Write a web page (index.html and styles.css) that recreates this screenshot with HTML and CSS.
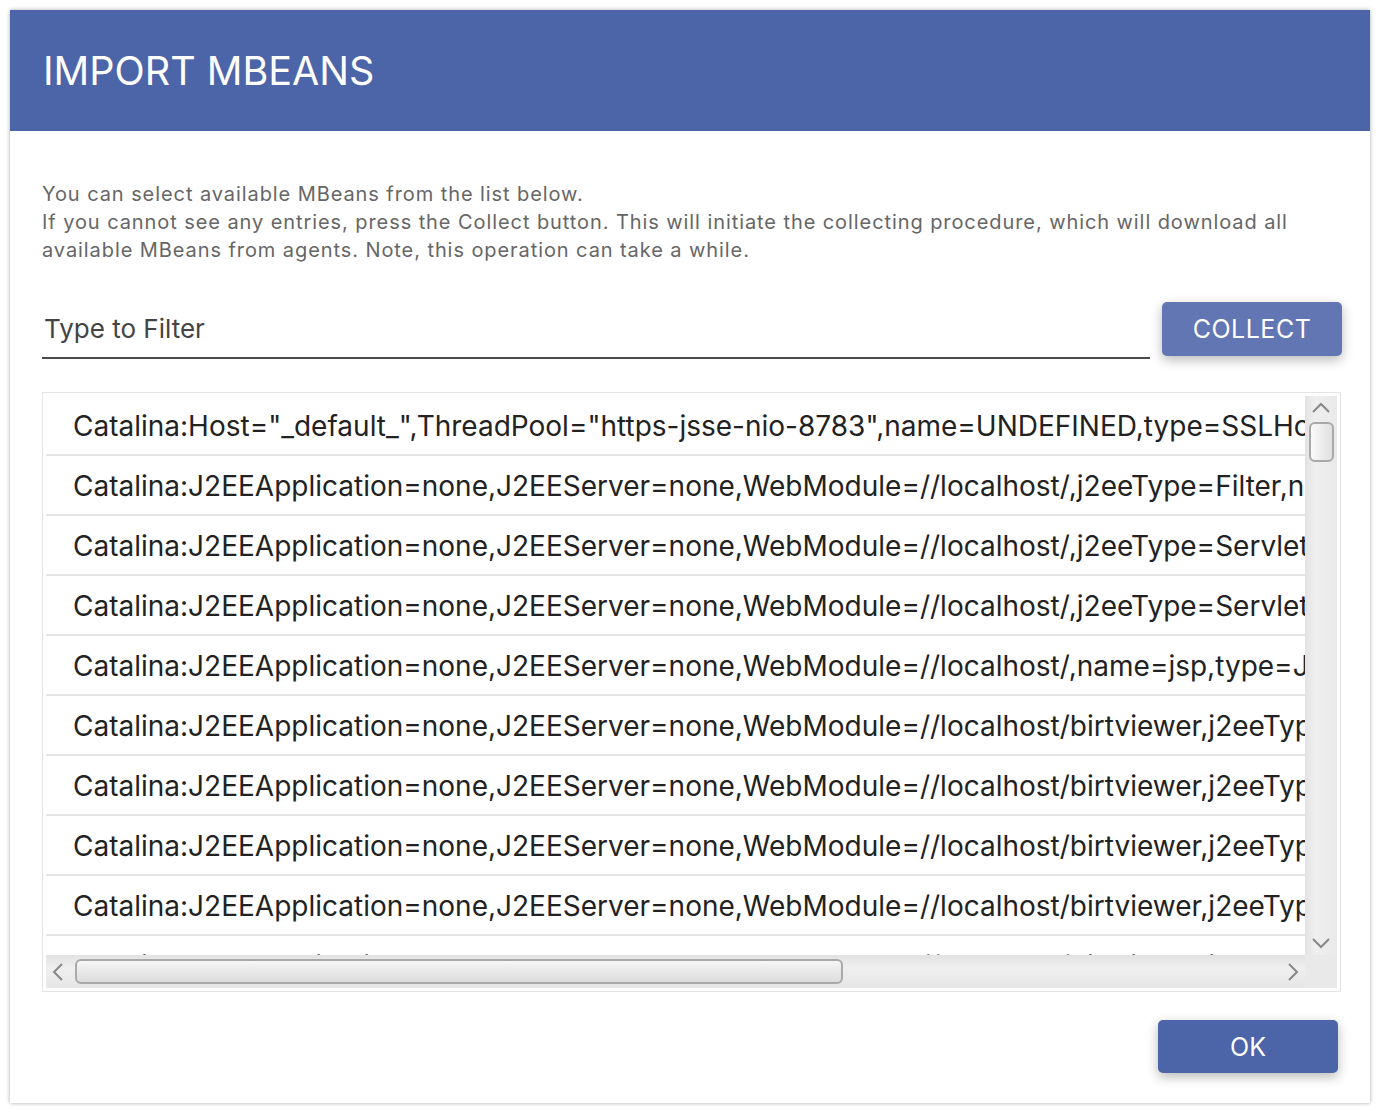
FILE: index.html
```html
<!DOCTYPE html>
<html>
<head>
<meta charset="utf-8">
<link rel="stylesheet" href="styles.css">
</head>
<body>
<div class="dialog">
  <div class="header"><h1 class="title">IMPORT MBEANS</h1></div>
  <div class="content">
    <p class="desc">You can select available MBeans from the list below.<br>If you cannot see any entries, press the Collect button. This will initiate the collecting procedure, which will download all available MBeans from agents. Note, this operation can take a while.</p>
    <div class="filter-row">
      <div class="filter"><span class="placeholder">Type to Filter</span></div>
      <button class="btn collect">COLLECT</button>
    </div>
    <div class="listbox">
      <div class="viewport">
        <div class="row">Catalina:Host="_default_",ThreadPool="https-jsse-nio-8783",name=UNDEFINED,type=SSLHostConfig</div>
        <div class="row">Catalina:J2EEApplication=none,J2EEServer=none,WebModule=//localhost/,j2eeType=Filter,name=Tomcat WebSocket (JSR356) Filter</div>
        <div class="row">Catalina:J2EEApplication=none,J2EEServer=none,WebModule=//localhost/,j2eeType=Servlet,name=default</div>
        <div class="row">Catalina:J2EEApplication=none,J2EEServer=none,WebModule=//localhost/,j2eeType=Servlet,name=jsp</div>
        <div class="row">Catalina:J2EEApplication=none,J2EEServer=none,WebModule=//localhost/,name=jsp,type=JspMonitor</div>
        <div class="row">Catalina:J2EEApplication=none,J2EEServer=none,WebModule=//localhost/birtviewer,j2eeType=Filter,name=ViewerFilter</div>
        <div class="row">Catalina:J2EEApplication=none,J2EEServer=none,WebModule=//localhost/birtviewer,j2eeType=Filter,name=Tomcat WebSocket (JSR356) Filter</div>
        <div class="row">Catalina:J2EEApplication=none,J2EEServer=none,WebModule=//localhost/birtviewer,j2eeType=Servlet,name=EngineServlet</div>
        <div class="row">Catalina:J2EEApplication=none,J2EEServer=none,WebModule=//localhost/birtviewer,j2eeType=Servlet,name=ViewerServlet</div>
        <div class="row">Catalina:J2EEApplication=none,J2EEServer=none,WebModule=//localhost/birtviewer,j2eeType=Servlet,name=jsp</div>
      </div>
      <div class="vscroll">
        <svg class="arrow" width="20" height="12" viewBox="0 0 20 12"><polyline points="2,10 10,2 18,10" fill="none" stroke="#888" stroke-width="2"/></svg>
        <div class="vthumb"></div>
        <div class="vspacer"></div>
        <svg class="arrow" width="20" height="12" viewBox="0 0 20 12"><polyline points="2,2 10,10 18,2" fill="none" stroke="#888" stroke-width="2"/></svg>
      </div>
      <div class="hscroll">
        <svg class="harrow" width="12" height="20" viewBox="0 0 12 20"><polyline points="10,2 2,10 10,18" fill="none" stroke="#888" stroke-width="2"/></svg>
        <div class="hthumb"></div>
        <div class="hspacer"></div>
        <svg class="harrow" width="12" height="20" viewBox="0 0 12 20"><polyline points="2,2 10,10 2,18" fill="none" stroke="#888" stroke-width="2"/></svg>
      </div>
      <div class="corner"></div>
    </div>
    <div class="footer">
      <button class="btn ok">OK</button>
    </div>
  </div>
</div>
</body>
</html>
```

FILE: styles.css
```css
html, body {
  margin: 0;
  padding: 0;
  background: #ffffff;
}
body {
  font-family: Inter, "Noto Sans", sans-serif;
}
.dialog {
  margin: 10px;
  width: 1360px;
  height: 1093px;
  background: #fff;
  box-shadow: 0 0 4px rgba(0,0,0,0.35);
  display: flex;
  flex-direction: column;
}
.header {
  height: 121px;
  background: #4c64a8;
  display: flex;
  align-items: center;
  padding-left: 33px;
  box-sizing: border-box;
}
.title {
  margin: 0;
  color: #fff;
  font-weight: 400;
  font-size: 39.5px;
  letter-spacing: 0;
}
.content {
  padding: 49px 29px 30px 32px;
  display: flex;
  flex-direction: column;
  flex: 1;
}
.desc {
  margin: 0;
  font-size: 20px;
  line-height: 28px;
  letter-spacing: 0.92px;
  color: #666;
}
.filter-row {
  margin-top: 38px;
  display: flex;
  align-items: flex-start;
  gap: 12px;
}
.filter {
  flex: 1;
  height: 52px;
  border-bottom: 2px solid #4a4a4a;
  display: flex;
  align-items: center;
  padding-left: 2px;
  padding-bottom: 3px;
  box-sizing: content-box;
}
.placeholder {
  font-size: 26px;
  color: #444;
}
.btn {
  border: none;
  border-radius: 5px;
  color: #fff;
  font-family: Inter, "Noto Sans", sans-serif;
  font-size: 25px;
  width: 180px;
  height: 54px;
  box-shadow: 0 4px 12px rgba(0,0,0,0.28);
  padding: 0;
}
.collect {
  background: #6276b4;
  margin-right: -1px;
  letter-spacing: 0.5px;
}
.ok {
  background: #4c64a8;
  height: 53px;
}
.listbox {
  margin-top: 33px;
  border: 1px solid #e3e3e3;
  padding: 3px;
  display: grid;
  grid-template-columns: 1fr 32px;
  grid-template-rows: 559px 33px;
}
.viewport {
  overflow: hidden;
  background: #fff;
}
.row {
  height: 56px;
  padding-top: 2px;
  border-bottom: 2px solid #e4e4e4;
  display: flex;
  align-items: center;
  padding-left: 27px;
  white-space: nowrap;
  font-size: 28px;
  color: #222;
}
.vscroll {
  background: linear-gradient(to right, #e2e2e2, #efefef 30%, #e9e9e9);
  display: flex;
  flex-direction: column;
  align-items: center;
  padding: 6px 0 6px;
  box-sizing: border-box;
}
.arrow { display: block; flex: none; }
.vthumb {
  margin-top: 8px;
  width: 21px;
  height: 36px;
  border: 2px solid #a9a9a9;
  border-radius: 6px;
  background: linear-gradient(to right, #fafafa, #e0e0e0);
  flex: none;
}
.vspacer { flex: 1; }
.hscroll {
  background: linear-gradient(to bottom, #e2e2e2, #efefef 40%, #e6e6e6);
  display: flex;
  align-items: center;
  padding: 0 6px;
}
.harrow { display: block; flex: none; }
.hthumb {
  margin-left: 11px;
  width: 764px;
  height: 21px;
  border: 2px solid #a9a9a9;
  border-radius: 6px;
  background: linear-gradient(to bottom, #f6f6f6, #dcdcdc);
  flex: none;
}
.hspacer { flex: 1; }
.corner {
  background: #e9e9e9;
}
.footer {
  margin-top: auto;
  display: flex;
  justify-content: flex-end;
  padding-right: 3px;
}
```
